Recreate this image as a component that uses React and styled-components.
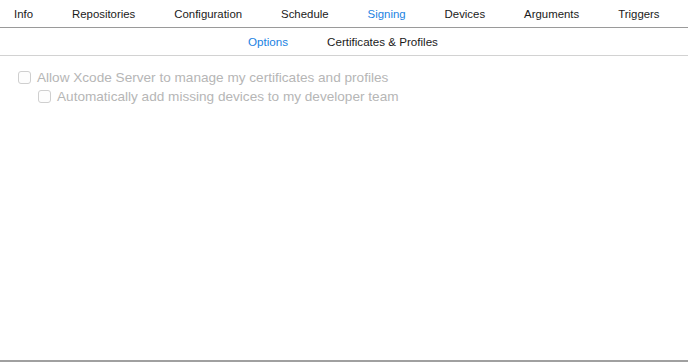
import React from 'react';
import styled, { createGlobalStyle } from 'styled-components';

const GlobalStyle = createGlobalStyle`
  html, body {
    margin: 0;
    padding: 0;
    background: #ffffff;
  }
  body {
    font-family: "Liberation Sans", Arial, sans-serif;
  }
`

export const Page = styled.div`
  width: 688px;
  height: 362px;
  display: flex;
  flex-direction: column;
  background: #ffffff;
  box-sizing: border-box;
  border-bottom: 2px solid #a0a0a0;
`

export const TabBar = styled.nav`
  display: flex;
  flex-flow: row nowrap;
  align-items: center;
  gap: 39px;
  height: 27px;
  padding: ${p => p.$center ? '0 2px 0 0' : '0 0 0 14px'};
  justify-content: ${p => p.$center ? 'center' : 'flex-start'};
  border-bottom: 1px solid ${p => p.$line};
  flex-shrink: 0;
`

export const Tab = styled.span`
  font-size: ${p => p.$size || 11.4}px;
  color: ${p => p.$active ? '#1a82e2' : '#1a1a1a'};
  white-space: nowrap;
  cursor: default;
`

export const Options = styled.div`
  display: flex;
  flex-direction: column;
  gap: 4px;
  padding: 14px 0 0 18px;
`

export const CheckRow = styled.label`
  display: flex;
  align-items: center;
  gap: 6px;
  margin-left: ${p => p.$indent || 0}px;
  font-size: 13.6px;
  color: #b6b6b6;
  white-space: nowrap;
`

export const Box = styled.span`
  width: 11px;
  height: 11px;
  border: 1px solid #cfcfcf;
  border-radius: 3px;
  background: #fdfdfd;
  flex-shrink: 0;
`

const mainTabs = ['Info', 'Repositories', 'Configuration', 'Schedule', 'Signing', 'Devices', 'Arguments', 'Triggers'];

export default function App() {
  return (
    <>
      <GlobalStyle />
      <Page>
        <TabBar $line="#9a9a9a">
          {mainTabs.map(t => (
            <Tab key={t} $active={t === 'Signing'}>{t}</Tab>
          ))}
        </TabBar>
        <TabBar $center $line="#d2d2d2">
          <Tab $active $size={11.6}>Options</Tab>
          <Tab $size={11.6}>Certificates &amp; Profiles</Tab>
        </TabBar>
        <Options>
          <CheckRow>
            <Box />
            Allow Xcode Server to manage my certificates and profiles
          </CheckRow>
          <CheckRow $indent={20}>
            <Box />
            Automatically add missing devices to my developer team
          </CheckRow>
        </Options>
      </Page>
    </>
  );
}
